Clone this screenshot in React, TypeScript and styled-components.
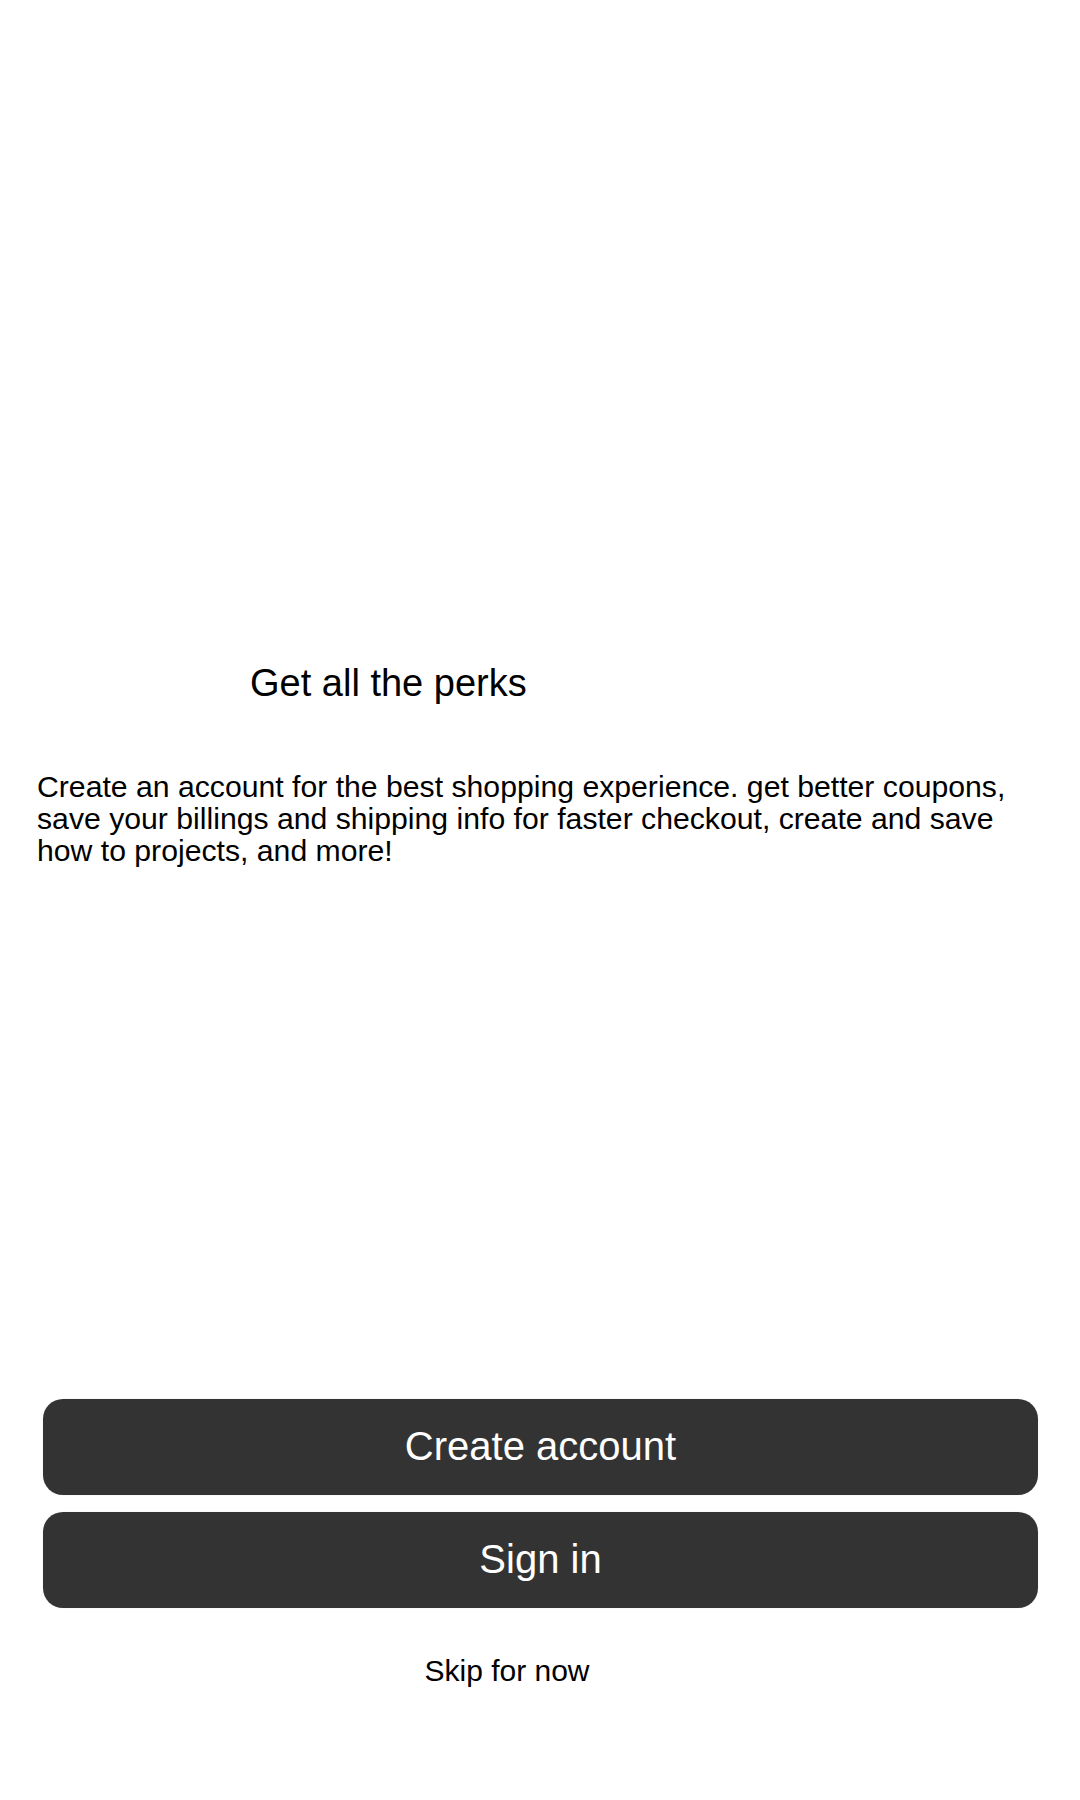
import React from "react";
import styled, { createGlobalStyle } from "styled-components";

const GlobalStyle = createGlobalStyle`
  html, body {
    margin: 0;
    padding: 0;
    background: #ffffff;
  }
  body {
    font-family: "Liberation Sans", Arial, sans-serif;
    color: #000000;
  }
`;

const Screen = styled.div`
  width: 1080px;
  min-height: 1800px;
  display: flex;
  flex-direction: column;
  box-sizing: border-box;
  padding-top: 662px;
`;

const Title = styled.h1`
  margin: 0;
  padding-left: 250px;
  font-size: 38px;
  font-weight: 400;
  line-height: normal;
`;

const Description = styled.p`
  margin: 66px 0 0;
  padding: 0 36px 0 37px;
  font-size: 30.2px;
  line-height: 32px;
`;

const Actions = styled.div`
  margin-top: 532px;
  padding: 0 42px 0 43px;
  display: flex;
  flex-direction: column;
  gap: 17px;
`;

const ActionButton = styled.button`
  height: 96px;
  border: none;
  border-radius: 20px;
  background: #333333;
  color: #ffffff;
  font-family: "Liberation Sans", Arial, sans-serif;
  font-size: 40px;
  padding: 0 0 2px;
  box-shadow: 0 0 2px rgba(0, 0, 0, 0.08);
  cursor: pointer;
`;

const SkipRow = styled.div`
  display: flex;
  justify-content: center;
  padding-right: 66px;
  margin-top: 46px;
`;

const SkipLink = styled.button`
  border: none;
  background: none;
  padding: 0;
  font-family: "Liberation Sans", Arial, sans-serif;
  font-size: 30px;
  color: #000000;
  cursor: pointer;
`;

export default function App() {
  return (
    <>
      <GlobalStyle />
      <Screen>
        <Title>Get all the perks</Title>
        <Description>
          Create an account for the best shopping experience. get better coupons,
          save your billings and shipping info for faster checkout, create and save
          how to projects, and more!
        </Description>
        <Actions>
          <ActionButton>Create account</ActionButton>
          <ActionButton>Sign in</ActionButton>
        </Actions>
        <SkipRow>
          <SkipLink>Skip for now</SkipLink>
        </SkipRow>
      </Screen>
    </>
  );
}
